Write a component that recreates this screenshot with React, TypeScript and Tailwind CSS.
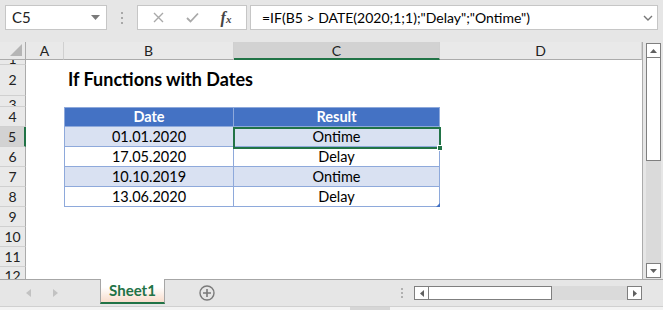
import React from 'react';

const HeaderCell = ({ label, width, selected }: { label: string; width: number; selected?: boolean }) => (
  <div
    className={`flex items-center justify-center border-r border-[#d0d0d0] text-[14px] text-[#222] ${
      selected ? 'bg-[#d2d2d2] border-b-2 border-b-[#217346]' : 'bg-[#e9e9e9] border-b border-b-[#ababab]'
    }`}
    style={{ width }}
  >
    {label}
  </div>
);

type RowProps = {
  n: number;
  h: number;
  selected?: boolean;
  labelAlign?: 'top' | 'bottom' | 'center';
  children?: React.ReactNode;
};

const Row = ({ n, h, selected, labelAlign = 'center', children }: RowProps) => {
  const align = labelAlign === 'top' ? 'items-start' : labelAlign === 'bottom' ? 'items-end' : 'items-center';
  return (
    <div className="flex" style={{ height: h }}>
      <div
        className={`w-[26px] shrink-0 flex justify-center overflow-hidden border-b border-[#d0d0d0] text-[14px] text-[#222] ${align} ${
          labelAlign === 'bottom' ? 'leading-[10px]' : 'leading-[18px]'
        } ${selected ? 'bg-[#d2d2d2] border-r-2 border-r-[#217346]' : 'bg-[#e9e9e9] border-r border-r-[#ababab]'}`}
      >
        {n}
      </div>
      <div className="w-[38px] shrink-0" />
      {children ?? <div className="w-[376px] shrink-0" />}
      <div className="w-[202px] shrink-0" />
    </div>
  );
};

const TableRow = ({ date, result, band, header }: { date: string; result: string; band?: boolean; header?: boolean }) => {
  const base = header
    ? 'bg-[#4472c4] text-white font-bold border-t border-[#8ea9db]'
    : band
    ? 'bg-[#d9e1f2] text-black'
    : 'bg-white text-black';
  return (
    <>
      <div className={`w-[170px] shrink-0 flex items-center justify-center border-l border-r border-b border-[#8ea9db] text-[14.5px] ${base}`}>
        {date}
      </div>
      <div className={`w-[206px] shrink-0 flex items-center justify-center border-r border-b border-[#8ea9db] text-[14.5px] ${base}`}>
        {result}
      </div>
    </>
  );
};

const App = () => {
  return (
    <div className="w-[663px] h-[310px] overflow-hidden bg-[#e6e6e6] select-none" style={{ fontFamily: 'Lato, "Noto Sans", sans-serif' }}>
      {/* formula bar */}
      <div className="h-[42px] flex items-start pt-[5px] pl-[5px]">
        <div className="w-[102px] h-[25px] bg-white border border-[#c6c6c6] flex items-center justify-between pl-[6px] pr-[6px]">
          <span className="text-[15px] text-[#222]">C5</span>
          <svg width="9" height="5" viewBox="0 0 9 5">
            <path d="M0 0 H9 L4.5 5 Z" fill="#7a7a7a" />
          </svg>
        </div>
        <div className="w-[30px] h-[25px] flex flex-col items-center justify-center gap-[3px]">
          <div className="w-[2px] h-[2px] bg-[#a8a8a8]" />
          <div className="w-[2px] h-[2px] bg-[#a8a8a8]" />
          <div className="w-[2px] h-[2px] bg-[#a8a8a8]" />
        </div>
        <div className="w-[110px] h-[25px] bg-white border border-[#c6c6c6] flex items-center">
          <div className="w-[40px] flex justify-center">
            <svg width="11" height="11" viewBox="0 0 11 11">
              <path d="M1 1 L10 10 M10 1 L1 10" stroke="#a9a9a9" strokeWidth="1.4" />
            </svg>
          </div>
          <div className="w-[28px] flex justify-center">
            <svg width="13" height="11" viewBox="0 0 13 11">
              <path d="M1 6 L4.5 9.5 L12 1.5" stroke="#a9a9a9" strokeWidth="1.8" fill="none" />
            </svg>
          </div>
          <div className="flex-1 flex justify-center text-[#444] italic font-bold text-[16px]" style={{ fontFamily: '"Liberation Serif", serif' }}>
            <span>f</span>
            <span className="text-[11px] mt-[5px]">x</span>
          </div>
        </div>
        <div className="ml-[3px] w-[408px] h-[25px] bg-white border border-[#c6c6c6] flex items-center justify-between pl-[11px] pr-[4px]">
          <span className="text-[14px] text-black whitespace-nowrap">=IF(B5 &gt; DATE(2020;1;1);"Delay";"Ontime")</span>
          <svg width="10" height="6" viewBox="0 0 10 6">
            <path d="M1 1 L5 5 L9 1" stroke="#777" strokeWidth="1.4" fill="none" />
          </svg>
        </div>
      </div>

      {/* sheet + vertical scrollbar */}
      <div className="flex h-[237px]">
        <div className="relative w-[643px] h-full bg-white border-r border-[#ababab] overflow-hidden">
          <div className="flex h-[18px]">
            <div className="w-[26px] bg-[#e9e9e9] border-r border-b border-[#ababab] relative">
              <svg className="absolute right-[3px] bottom-[3px]" width="12" height="12" viewBox="0 0 12 12">
                <path d="M12 0 V12 H0 Z" fill="#b5b5b5" />
              </svg>
            </div>
            <HeaderCell label="A" width={38} />
            <HeaderCell label="B" width={170} />
            <HeaderCell label="C" width={206} selected />
            <HeaderCell label="D" width={202} />
          </div>
          <Row n={1} h={5} labelAlign="bottom" />
          <Row n={2} h={31}>
            <div className="w-[376px] shrink-0 flex items-end pb-[3px] pl-[4px]">
              <span className="text-[18px] font-bold text-black whitespace-nowrap">If Functions with Dates</span>
            </div>
          </Row>
          <Row n={3} h={11} labelAlign="top" />
          <Row n={4} h={20}>
            <TableRow date="Date" result="Result" header />
          </Row>
          <Row n={5} h={20} selected>
            <TableRow date="01.01.2020" result="Ontime" band />
          </Row>
          <Row n={6} h={20}>
            <TableRow date="17.05.2020" result="Delay" />
          </Row>
          <Row n={7} h={20}>
            <TableRow date="10.10.2019" result="Ontime" band />
          </Row>
          <Row n={8} h={20}>
            <TableRow date="13.06.2020" result="Delay" />
          </Row>
          <Row n={9} h={20} />
          <Row n={10} h={20} />
          <Row n={11} h={20} />
          <Row n={12} h={20} labelAlign="top" />

          {/* active cell */}
          <div className="absolute left-[233px] top-[85px] w-[208px] h-[22px] border-2 border-[#217346]" />
          <div className="absolute left-[437px] top-[103px] w-[6px] h-[6px] bg-[#217346] border border-white" />
          {/* table resize handle */}
          <svg className="absolute left-[436px] top-[161px]" width="4" height="4" viewBox="0 0 4 4">
            <path d="M4 0 V4 H0 Z" fill="#4472c4" />
          </svg>
        </div>
        <div className="w-[20px] h-full pl-[3px] pt-[1px]">
          <div className="w-[15px] h-[235px] bg-[#dadada] flex flex-col justify-between">
            <div>
              <div className="h-[15px] bg-white border border-[#7f7f7f] flex items-center justify-center">
                <svg width="7" height="4" viewBox="0 0 7 4">
                  <path d="M0 4 H7 L3.5 0 Z" fill="#606060" />
                </svg>
              </div>
              <div className="h-[103px] bg-white border border-[#7f7f7f] border-t-0" />
            </div>
            <div className="h-[15px] bg-white border border-[#7f7f7f] flex items-center justify-center">
              <svg width="7" height="4" viewBox="0 0 7 4">
                <path d="M0 0 H7 L3.5 4 Z" fill="#606060" />
              </svg>
            </div>
          </div>
        </div>
      </div>

      {/* sheet tabs */}
      <div className="h-[27px] flex items-start border-t border-[#a6a6a6]">
        <div className="w-[100px] h-full flex items-center gap-[22px] pl-[26px]">
          <svg width="5" height="8" viewBox="0 0 5 8">
            <path d="M5 0 V8 L0 4 Z" fill="#c2c2c2" />
          </svg>
          <svg width="5" height="8" viewBox="0 0 5 8">
            <path d="M0 0 V8 L5 4 Z" fill="#c2c2c2" />
          </svg>
        </div>
        <div
          className="-mt-px w-[65px] h-[25px] border-l border-r border-[#a6a6a6] border-b-2 border-b-[#217346] flex items-center justify-center text-[15px] font-bold text-[#217346]"
          style={{ background: 'linear-gradient(#ffffff 35%, #f8dccb)' }}
        >
          Sheet1
        </div>
        <div className="w-[83px] h-full flex items-center justify-center">
          <svg width="16" height="16" viewBox="0 0 16 16">
            <circle cx="8" cy="8" r="7" stroke="#7a7a7a" strokeWidth="1.4" fill="none" />
            <path d="M8 4 V12 M4 8 H12" stroke="#7a7a7a" strokeWidth="1.6" />
          </svg>
        </div>
        <div className="w-[150px]" />
        <div className="h-full flex flex-col items-center justify-center gap-[2px] w-[8px]">
          <div className="w-[2px] h-[2px] bg-[#b0b0b0]" />
          <div className="w-[2px] h-[2px] bg-[#b0b0b0]" />
          <div className="w-[2px] h-[2px] bg-[#b0b0b0]" />
        </div>
        <div className="ml-[8px] mt-[6px] w-[228px] h-[14px] bg-[#dadada] flex">
          <div className="w-[15px] h-full bg-white border border-[#7f7f7f] flex items-center justify-center">
            <svg width="4" height="7" viewBox="0 0 4 7">
              <path d="M4 0 V7 L0 3.5 Z" fill="#606060" />
            </svg>
          </div>
          <div className="w-[123px] h-full bg-white border border-[#7f7f7f] border-l-0" />
          <div className="flex-1" />
          <div className="w-[15px] h-full bg-white border border-[#7f7f7f] flex items-center justify-center">
            <svg width="4" height="7" viewBox="0 0 4 7">
              <path d="M0 0 V7 L4 3.5 Z" fill="#606060" />
            </svg>
          </div>
        </div>
      </div>
      <div className="h-[4px] bg-[#f3f3f3] border-t border-[#d0d0d0] flex">
        <div className="ml-[350px] w-[40px] h-full bg-[#d6d6d6]" />
      </div>
    </div>
  );
};

export default App;
